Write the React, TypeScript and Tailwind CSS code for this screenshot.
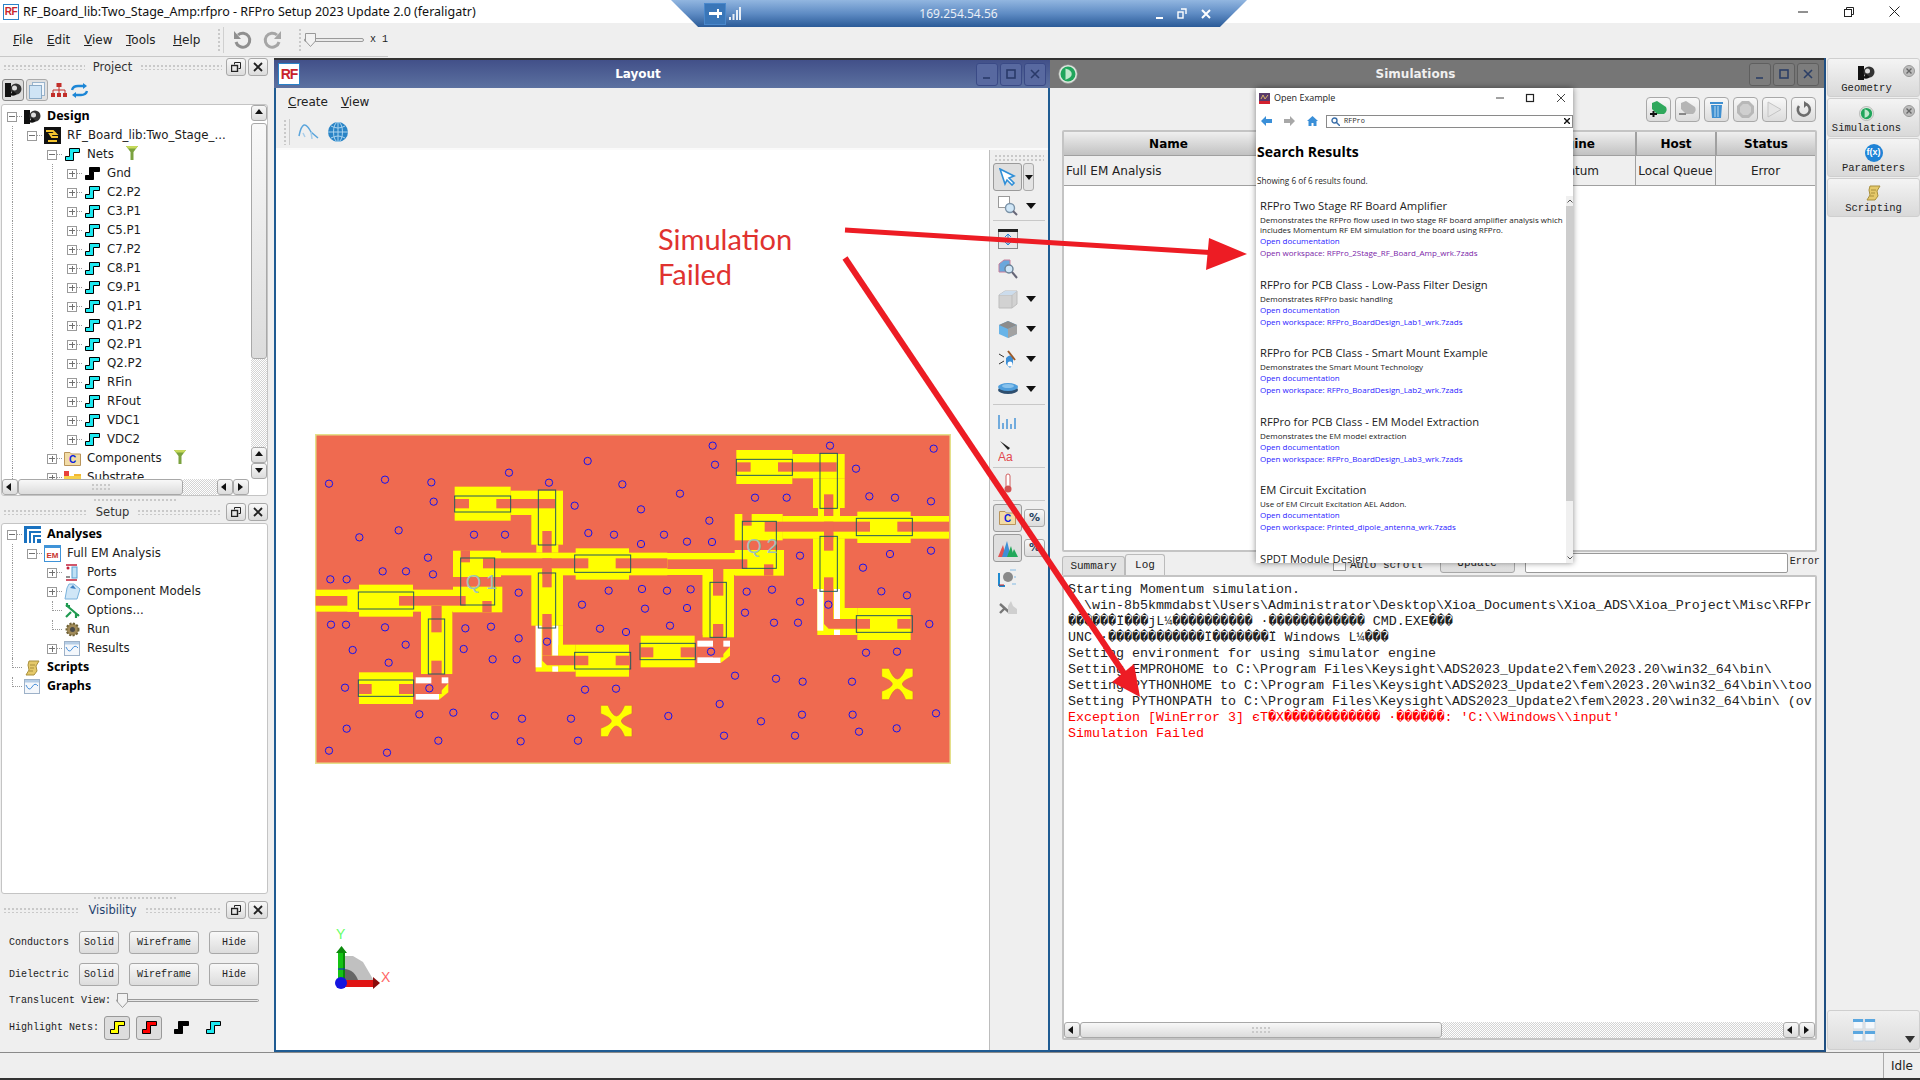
import React from 'react'

const uiFont = 'font-["DejaVu_Sans",sans-serif]'
const grip = 'bg-[radial-gradient(#c9c9c9_1px,transparent_1px)] bg-[length:4px_4px]'
const dither = 'bg-[repeating-conic-gradient(#d4d4d4_0_25%,#ffffff_0_50%)] bg-[length:2px_2px]'
const btnFace = 'bg-gradient-to-b from-[#f8f8f8] to-[#dcdcdc] border border-[#a8a8a8] rounded-[3px]'

const NetIcon = ({ color = '#1de9f0' }: { color?: string }) => (
  <svg width="15" height="13" viewBox="0 0 15 13">
    <path d="M.5 8.5H4.5V.5H14.5V4.5H8.5V12.5H.5Z" fill={color} stroke="#000" />
  </svg>
)

const DesignIcon = () => (
  <svg width="17" height="16" viewBox="0 0 17 16">
    <rect x="0" y="1" width="6" height="14" fill="#111" />
    <circle cx="11" cy="7" r="5.5" fill="#333" />
    <circle cx="9.5" cy="6" r="2.5" fill="#ddd" />
    <path d="M5 13 Q9 15 12 12 L8 9Z" fill="#111" />
  </svg>
)

const BoardIcon = () => (
  <svg width="17" height="17" viewBox="0 0 17 17">
    <rect width="17" height="17" fill="#111" />
    <path d="M2 4H9L12 7H6L8 10H14M4 14H13" stroke="#f4c430" strokeWidth="2" fill="none" />
  </svg>
)

const FilterIcon = () => (
  <svg width="12" height="14" viewBox="0 0 12 14">
    <path d="M0 0H12L7.5 6V14H4.5V6Z" fill="#7ba23f" />
    <path d="M0 0H12L10 2.5H2Z" fill="#c6d95a" />
  </svg>
)

const FolderC = () => (
  <svg width="17" height="14" viewBox="0 0 17 14">
    <path d="M.5 2V.5H6L7.5 2H16.5V13.5H.5Z" fill="#f2dca6" stroke="#b9945a" />
    <text x="8.5" y="11" textAnchor="middle" fontSize="10" fontWeight="700" fill="#0a1fe0" fontFamily="Liberation Sans">C</text>
  </svg>
)

const SubstrateIcon = () => (
  <svg width="17" height="14" viewBox="0 0 17 14">
    <rect x="0" y="0" width="5" height="5" fill="#e8413b" />
    <rect x="10" y="3" width="7" height="3" fill="#f2b632" />
    <rect x="0" y="5" width="17" height="4" fill="#f6d04a" />
    <rect x="0" y="9" width="17" height="5" fill="#a6c94a" />
  </svg>
)

const AnalysesIcon = () => (
  <svg width="17" height="17" viewBox="0 0 17 17">
    <path d="M0 0H17V3H3V17H0Z" fill="#1a72c0" />
    <path d="M5 5H17V7H7V17H5Z" fill="#1a72c0" />
    <path d="M9 9H17V11H11V17H9Z" fill="#1a72c0" />
    <path d="M13 13H17V17H13Z" fill="#1a72c0" />
  </svg>
)

const EmIcon = () => (
  <svg width="17" height="17" viewBox="0 0 17 17">
    <rect x=".5" y=".5" width="16" height="16" fill="#fff" stroke="#3f93d8" />
    <rect x="1" y="1" width="15" height="2" fill="#3f93d8" />
    <text x="8.5" y="13" textAnchor="middle" fontSize="8" fontWeight="700" fill="#c8342f" fontFamily="Liberation Sans">EM</text>
  </svg>
)

const PortsIcon = () => (
  <svg width="14" height="17" viewBox="0 0 14 17">
    <rect x="7" y="3" width="5" height="11" fill="#bfe1f5" stroke="#5a9fd0" />
    <path d="M1 1H12M1 16H12" stroke="#c2203a" strokeWidth="1.5" />
    <circle cx="3" cy="4" r="1.5" fill="#c2203a" />
    <path d="M1 13H5" stroke="#222" />
  </svg>
)

const ModelsIcon = () => (
  <svg width="17" height="17" viewBox="0 0 17 17">
    <path d="M3 5L1 16H13L16 6L10 1H5Z" fill="#cfe6f7" stroke="#7ab2dc" />
    <path d="M6 5L9 2L12 6Z" fill="#3d7fc4" />
  </svg>
)

const WrenchIcon = () => (
  <svg width="17" height="17" viewBox="0 0 17 17">
    <path d="M3 1V4H6M2 3L15 14M12 16V13H15" stroke="#1f9a50" strokeWidth="2.2" fill="none" />
    <path d="M2 15L7 10" stroke="#1f9a50" strokeWidth="2.2" />
  </svg>
)

const GearIcon = () => (
  <svg width="17" height="15" viewBox="0 0 17 15">
    <circle cx="8.5" cy="7.5" r="6" fill="#a08a58" stroke="#6f6238" strokeWidth="2" strokeDasharray="2 1.5" />
    <circle cx="8.5" cy="7.5" r="2.5" fill="#4a4a4a" />
  </svg>
)

const GraphIcon = () => (
  <svg width="16" height="15" viewBox="0 0 16 15">
    <rect x=".5" y=".5" width="15" height="14" fill="#f4f7fb" stroke="#9db1c8" />
    <rect x="1" y="1" width="14" height="2.5" fill="#b5cde6" />
    <path d="M2 6Q5 13 8 8T14 7" stroke="#4a90d9" fill="none" />
  </svg>
)

const ScrollIcon = () => (
  <svg width="15" height="16" viewBox="0 0 15 16">
    <path d="M4 1H14L11 6L12 11L9 15H1L4 10L3 5Z" fill="#e5c96a" stroke="#a88f3c" />
    <path d="M5 5H10M5 8H9M4 11H8" stroke="#a88f3c" />
  </svg>
)

const SimIcon = ({ size = 15 }: { size?: number }) => (
  <svg width={size} height={size} viewBox="0 0 16 16">
    <circle cx="8" cy="8" r="7.5" fill="#dfe7df" stroke="#8a8a8a" strokeWidth=".5" />
    <circle cx="8" cy="8" r="6" fill="#1fa55b" />
    <path d="M6 3.5Q11 5 11 8T6 12.5Z" fill="#bfe8cc" />
  </svg>
)

const Expander = ({ open }: { open: boolean }) => (
  <div className="relative w-5 h-full flex items-center justify-center shrink-0">
    <span className="absolute left-[14px] w-[6px] border-t border-dotted border-[#999]" />
    <span className="relative w-[10px] h-[10px] border border-[#9a9a9a] bg-white flex items-center justify-center">
      <span className="absolute w-[6px] h-px bg-[#707070]" />
      {!open && <span className="absolute w-px h-[6px] bg-[#707070]" />}
    </span>
  </div>
)

type Row = {
  guides: boolean[]
  exp?: 'open' | 'closed'
  icon: React.ReactNode
  label: string
  bold?: boolean
  after?: React.ReactNode
}

const TreeRow = ({ guides, exp, icon, label, bold, after }: Row) => (
  <div className="flex items-center h-[19px]">
    {guides.map((g, i) => (
      <div key={i} className="w-5 h-full shrink-0 flex justify-center">
        {g && <span className="h-full border-l border-dotted border-[#999]" />}
      </div>
    ))}
    {exp ? (
      <Expander open={exp === 'open'} />
    ) : (
      <div className="relative w-5 h-full shrink-0 flex items-center">
        <span className="absolute left-[10px] top-0 h-1/2 border-l border-dotted border-[#999]" />
        <span className="ml-[10px] w-[10px] border-t border-dotted border-[#999]" />
      </div>
    )}
    <div className="w-5 shrink-0 flex justify-center">{icon}</div>
    <span
      className={
        bold
          ? 'ml-[5px] font-["Noto_Sans",sans-serif] font-bold text-[12.5px] text-black whitespace-nowrap'
          : 'ml-[5px] font-["DejaVu_Sans",sans-serif] text-[11.8px] text-[#1c1c1c] whitespace-nowrap'
      }
    >
      {label}
    </span>
    {after}
  </div>
)

const nets = ['C2.P2', 'C3.P1', 'C5.P1', 'C7.P2', 'C8.P1', 'C9.P1', 'Q1.P1', 'Q1.P2', 'Q2.P1', 'Q2.P2', 'RFin', 'RFout', 'VDC1', 'VDC2']

const ScrollBtn = ({ dir }: { dir: 'up' | 'down' | 'left' | 'right' }) => {
  const d = { up: 'M1 6H9L5 1Z', down: 'M1 2H9L5 7Z', left: 'M6 1V9L1 5Z', right: 'M2 1V9L7 5Z' }[dir]
  return (
    <div className={`${btnFace} w-[16px] h-[16px] shrink-0 flex items-center justify-center`}>
      <svg width="10" height="10" viewBox="0 0 10 10">
        <path d={d} fill="#111" />
      </svg>
    </div>
  )
}

const DockTitle = ({ title, color = 'text-[#333]' }: { title: string; color?: string }) => (
  <div className="flex items-center h-[18px] pl-[3px] pr-[2px]">
    <div className={`flex-1 h-[6px] ${grip}`} />
    <span className={`px-2 pt-px text-[11.5px] ${uiFont} ${color}`}>{title}</span>
    <div className={`flex-1 h-[6px] ${grip}`} />
    <div className="flex gap-[2px] ml-1">
      <div className={`${btnFace} w-[20px] h-[18px] flex items-center justify-center`}>
        <svg width="10" height="10" viewBox="0 0 10 10" fill="none" stroke="#222">
          <path d="M3.5 2.5V.5H9.5V6.5H7.5" />
          <rect x=".5" y="3.5" width="6" height="6" strokeWidth="1.4" />
        </svg>
      </div>
      <div className={`${btnFace} w-[20px] h-[18px] flex items-center justify-center`}>
        <svg width="10" height="10" viewBox="0 0 10 10" stroke="#222" strokeWidth="1.8">
          <path d="M1 1L9 9M9 1L1 9" />
        </svg>
      </div>
    </div>
  </div>
)

const MonoBtn = ({ w, children }: { w: string; children: string }) => (
  <div className={`${btnFace} ${w} h-[23px] flex items-center justify-center`}>{children}</div>
)

const LeftColumn = () => (
  <div className="w-[270px] shrink-0 flex flex-col">
    <DockTitle title="Project" />
    <div className="h-[28px] flex items-center pl-[2px] gap-[2px]">
      <div className="w-[22px] h-[22px] border border-[#888] rounded-[3px] bg-[#dcdcdc] flex items-center justify-center">
        <DesignIcon />
      </div>
      <div className="w-[22px] h-[22px] border border-[#aaa] rounded-[3px] bg-[#e0e0e0] flex items-center justify-center">
        <svg width="16" height="17" viewBox="0 0 16 17">
          <rect x="3.5" y=".5" width="12" height="13" fill="#f2f6fa" stroke="#9ab4cc" />
          <rect x=".5" y="3.5" width="12" height="13" fill="#cfe4f5" stroke="#8aaac6" />
        </svg>
      </div>
      <div className="w-[18px] flex justify-center">
        <svg width="16" height="16" viewBox="0 0 16 16" fill="#c22f2a">
          <rect x="5.5" y="1" width="5" height="4" />
          <rect x="0" y="11" width="4" height="4" />
          <rect x="6" y="11" width="4" height="4" />
          <rect x="12" y="11" width="4" height="4" />
          <path d="M8 5V11M2 11V8H14V11" fill="none" stroke="#c22f2a" />
        </svg>
      </div>
      <div className="w-[18px] flex justify-center">
        <svg width="17" height="15" viewBox="0 0 17 15" fill="none" stroke="#1c86d6" strokeWidth="2.4">
          <path d="M1 7Q2 3 7 3H13M16 8Q15 12 10 12H4" />
          <path d="M12 0L16 3L12 6Z" fill="#1c86d6" stroke="none" />
          <path d="M5 9L1 12L5 15Z" fill="#1c86d6" stroke="none" />
        </svg>
      </div>
    </div>
    <div className="h-[392px] mr-[2px] ml-px border border-[#c4c4c4] rounded-[3px] bg-white flex flex-col overflow-hidden">
      <div className="flex h-[374px] overflow-hidden">
        <div className="flex-1 overflow-hidden pt-[2px]">
          <TreeRow guides={[]} exp="open" icon={<DesignIcon />} label="Design" bold />
          <TreeRow guides={[true]} exp="open" icon={<BoardIcon />} label="RF_Board_lib:Two_Stage_..." />
          <TreeRow guides={[true, false]} exp="open" icon={<NetIcon />} label="Nets" after={<span className="ml-3 -mt-1"><FilterIcon /></span>} />
          <TreeRow guides={[true, false, true]} exp="closed" icon={<NetIcon color="#000" />} label="Gnd" />
          {nets.map((n) => (
            <TreeRow key={n} guides={[true, false, true]} exp="closed" icon={<NetIcon />} label={n} />
          ))}
          <TreeRow guides={[true, false]} exp="closed" icon={<FolderC />} label="Components" after={<span className="ml-3 -mt-1"><FilterIcon /></span>} />
          <TreeRow guides={[true, false]} exp="closed" icon={<SubstrateIcon />} label="Substrate" />
        </div>
        <div className="w-[16px] flex flex-col shrink-0">
          <ScrollBtn dir="up" />
          <div className={`${btnFace} h-[236px] mt-[2px]`} />
          <div className={`flex-1 ${dither}`} />
          <ScrollBtn dir="up" />
          <ScrollBtn dir="down" />
        </div>
      </div>
      <div className="flex h-[16px] pr-[18px]">
        <ScrollBtn dir="left" />
        <div className={`${btnFace} w-[165px] flex items-center justify-center`}>
          <div className={`w-5 h-2 ${grip}`} />
        </div>
        <div className={`flex-1 ${dither}`} />
        <ScrollBtn dir="left" />
        <ScrollBtn dir="right" />
      </div>
    </div>
    <div className="h-[7px] flex items-center justify-center">
      <div className={`w-[84px] h-[3px] ${grip}`} />
    </div>
    <DockTitle title="Setup" />
    <div className="h-[371px] mt-[2px] mr-[2px] ml-px border border-[#c4c4c4] rounded-[3px] bg-white pt-px overflow-hidden">
      <TreeRow guides={[]} exp="open" icon={<AnalysesIcon />} label="Analyses" bold />
      <TreeRow guides={[true]} exp="open" icon={<EmIcon />} label="Full EM Analysis" />
      <TreeRow guides={[true, false]} exp="closed" icon={<PortsIcon />} label="Ports" />
      <TreeRow guides={[true, false]} exp="closed" icon={<ModelsIcon />} label="Component Models" />
      <TreeRow guides={[true, false]} icon={<WrenchIcon />} label="Options..." />
      <TreeRow guides={[true, false]} icon={<GearIcon />} label="Run" />
      <TreeRow guides={[true, false]} exp="closed" icon={<GraphIcon />} label="Results" />
      <TreeRow guides={[]} icon={<ScrollIcon />} label="Scripts" bold />
      <TreeRow guides={[]} icon={<GraphIcon />} label="Graphs" bold />
    </div>
    <div className="h-[7px] flex items-center justify-center">
      <div className={`w-[84px] h-[3px] ${grip}`} />
    </div>
    <DockTitle title="Visibility" color="text-[#1f3f6e]" />
    <div className='pl-[9px] pt-[12px] font-["Liberation_Mono","DejaVu_Sans_Mono",monospace] text-[10px] text-[#222]'>
      <div className="flex items-center gap-[10px]">
        <span className="w-[60px]">Conductors</span>
        <MonoBtn w="w-[40px]">Solid</MonoBtn>
        <MonoBtn w="w-[70px]">Wireframe</MonoBtn>
        <MonoBtn w="w-[50px]">Hide</MonoBtn>
      </div>
      <div className="flex items-center gap-[10px] mt-[9px]">
        <span className="w-[60px]">Dielectric</span>
        <MonoBtn w="w-[40px]">Solid</MonoBtn>
        <MonoBtn w="w-[70px]">Wireframe</MonoBtn>
        <MonoBtn w="w-[50px]">Hide</MonoBtn>
      </div>
      <div className="flex items-center mt-[4px] h-[20px]">
        <span className="w-[107px]">Translucent View:</span>
        <div className="relative w-[143px] h-[3px] border border-[#9a9a9a] rounded-full bg-[#e8e8e8] flex items-center">
          <svg width="11" height="15" viewBox="0 0 11 15" className="absolute left-0">
            <path d="M.5 .5H10.5V9L5.5 14.5L.5 9Z" fill="#f2f2f2" stroke="#999" />
          </svg>
        </div>
      </div>
      <div className="flex items-center mt-[6px] h-[23px]">
        <span className="w-[95px]">Highlight Nets:</span>
        <div className="w-[26px] h-[24px] rounded-[3px] border border-[#999] bg-[#dddddd] flex items-center justify-center">
          <NetIcon color="#ffff00" />
        </div>
        <div className="w-[26px] h-[24px] ml-[6px] rounded-[3px] border border-[#999] bg-[#dddddd] flex items-center justify-center">
          <NetIcon color="#ff0000" />
        </div>
        <div className="ml-[6px] w-[26px] flex justify-center"><NetIcon color="#000" /></div>
        <div className="ml-[6px] w-[26px] flex justify-center"><NetIcon /></div>
      </div>
    </div>
  </div>
)

const yellow = '#ffff00'
const etch = '#ef6a50'

const Box = ({ x, y, w, h, c }: { x: number; y: number; w: number; h: number; c: string }) => (
  <rect x={x} y={y} width={w} height={h} fill={c} />
)

// all pcb numbers are in 3x pixels of the picture
const Stage = ({ dx, dy, inputX }: { dx: number; dy: number; inputX: number }) => (
  <g transform={`translate(${dx} ${dy})`}>
    {/* input line and bias stub */}
    <Box x={115} y={492} w={320} h={66} c={yellow} />
    <Box x={336} y={540} w={94} h={205} c={yellow} />
    <Box x={336} y={558} w={30} h={180} c={yellow} />
    {/* lower left pad */}
    <Box x={150} y={740} w={162} h={95} c={yellow} />
    <Box x={320} y={755} w={98} h={18} c="#fff" />
    <Box x={320} y={803} w={70} h={19} c="#fff" />
    <path d="M418 773V800L390 822V803Z" fill={yellow} />
    <Box x={150} y={775} w={38} h={30} c={etch} />
    <Box x={270} y={775} w={120} h={30} c={etch} />
    <Box x={367} y={705} w={31} h={100} c={etch} />
    <Box x={367} y={540} w={31} h={80} c={etch} />
    {/* transistor */}
    <Box x={432} y={375} w={144} h={79} c={yellow} />
    <Box x={432} y={483} w={148} h={77} c={yellow} />
    <Box x={455} y={374} w={28} h={36} c={etch} />
    <Box x={520} y={526} w={28} h={34} c={etch} />
    <Box x={inputX} y={511} w={470 - inputX} h={29} c={etch} />
    {/* top stub */}
    <Box x={437} y={183} w={168} h={102} c={yellow} />
    <Box x={605} y={195} w={157} h={73} c={yellow} />
    <Box x={667} y={268} w={95} h={89} c={yellow} />
    <Box x={682} y={357} w={66} h={24} c={yellow} />
    <Box x={437} y={220} w={43} h={28} c={etch} />
    <Box x={562} y={220} w={176} h={28} c={etch} />
    <Box x={700} y={316} w={28} h={170} c={etch} />
    {/* output line */}
    <Box x={575} y={381} w={500} h={68} c={yellow} />
    <Box x={800} y={368} w={160} h={94} c={yellow} />
    <Box x={522} y={398} w={316} h={30} c={etch} />
    <Box x={920} y={398} w={155} h={30} c={etch} />
    <Box x={700} y={398} w={28} h={88} c={etch} />
    {/* lower stub */}
    <Box x={667} y={448} w={95} h={152} c={yellow} />
    <Box x={748} y={600} w={14} h={60} c={yellow} />
    <Box x={680} y={600} w={68} h={138} c={yellow} />
    <Box x={680} y={600} w={18} h={125} c="#fff" />
    <Box x={730} y={600} w={18} h={90} c="#fff" />
    <Box x={730} y={722} w={18} h={16} c="#fff" />
    <Box x={748} y={657} w={52} h={81} c={yellow} />
    <Box x={800} y={657} w={160} h={96} c={yellow} />
    <Box x={700} y={565} w={28} h={125} c={etch} />
    <path d="M700 690V705L714 719H838V690Z" fill={etch} />
    <Box x={920} y={690} w={40} h={29} c={etch} />
    <Box x={700} y={430} w={28} h={55} c={etch} />
    <g fill="none" stroke="#245a5e" strokeWidth="3">
      <rect x="148" y="763" width="166" height="49" />
      <rect x="358" y="580" width="49" height="165" />
      <rect x="455" y="397" width="102" height="141" />
      <rect x="437" y="211" width="168" height="48" />
      <rect x="688" y="193" width="52" height="165" />
      <rect x="688" y="442" width="52" height="165" />
      <rect x="797" y="388" width="168" height="52" />
      <rect x="797" y="680" width="168" height="50" />
    </g>
  </g>
)

const vias: [number, number][] = [
  [60, 174], [228, 162], [367, 170], [374, 228], [600, 141], [836, 106], [720, 171], [940, 176], [797, 240], [151, 335], [269, 314], [495, 327], [588, 327], [838, 322], [915, 327], [357, 396], [221, 437], [291, 437], [372, 446], [64, 461], [113, 461], [629, 501], [899, 495], [819, 537], [66, 597], [111, 597], [228, 605], [469, 608], [546, 603], [873, 609], [951, 619], [629, 638], [714, 648], [131, 673], [290, 657], [464, 670], [239, 711], [551, 701], [623, 701], [108, 786], [361, 788], [828, 792], [921, 789], [331, 866], [433, 861], [557, 870], [639, 879], [786, 879], [113, 909], [388, 945], [635, 947], [807, 945], [60, 975], [234, 981],
  [1211, 60], [1563, 60], [1874, 69], [1218, 117], [1641, 129], [1113, 204], [996, 251], [1338, 216], [1433, 216], [1681, 212], [1758, 216], [1866, 227], [1201, 285], [1065, 327], [996, 355], [1134, 348], [1209, 349], [1473, 390], [1866, 375], [1743, 385], [1662, 426], [999, 490], [1074, 495], [1145, 491], [1313, 498], [1389, 492], [1473, 528], [1717, 497], [1794, 509], [1008, 549], [1134, 547], [1558, 537], [1308, 561], [1083, 600], [1395, 591], [1467, 591], [1861, 595], [1206, 678], [1671, 681], [1764, 678], [1278, 750], [1401, 759], [1481, 768], [1629, 768], [1232, 835], [1078, 871], [1356, 887], [1479, 867], [1631, 867], [1881, 863], [1650, 918], [1763, 908], [1245, 930], [1458, 930],
]

const Cross = ({ x, y }: { x: number; y: number }) => (
  <path
    transform={`translate(${x} ${y})`}
    d="M-47-47L-25-47Q-12-15 0-15Q12-15 25-47L47-47L47-22Q15-10 15 0Q15 10 47 22L47 47L25 47Q12 15 0 15Q-12 15-25 47L-47 47L-47 22Q-15 10-15 0Q-15-10-47-22Z"
    fill={yellow}
    stroke="#dd6045"
    strokeWidth="2"
  />
)

const Pcb = () => (
  <svg width="636" height="330" viewBox="18 25 1908 990" className="shrink-0">
    <rect x="20" y="27" width="1904" height="986" fill={etch} stroke="#e4e08a" strokeWidth="5" />
    <Stage dx={845} dy={-110} inputX={115} />
    <Box x={20} y={492} w={130} h={66} c={yellow} />
    <Box x={150} y={477} w={162} h={96} c={yellow} />
    <Box x={20} y={511} w={168} h={29} c={etch} />
    <Stage dx={0} dy={0} inputX={270} />
    <rect x="148" y="499" width="166" height="51" fill="none" stroke="#245a5e" strokeWidth="3" />
    <text x="470" y="490" fontSize="60" fill="#9cc3b8" fontFamily="Liberation Sans" letterSpacing="14">Q1</text>
    <text x="1312" y="381" fontSize="60" fill="#9cc3b8" fontFamily="Liberation Sans" letterSpacing="14">Q2</text>
    <Cross x={922} y={886} />
    <Cross x={1765} y={775} />
    {vias.map(([x, y], i) => (
      <circle key={i} cx={x} cy={y} r="11" fill="none" stroke="#1414f0" strokeWidth="3" />
    ))}
  </svg>
)

const Axis = () => (
  <svg width="70" height="72" viewBox="0 0 70 72" className="absolute left-[53px] bottom-[56px]">
    <path d="M15 61V34H24L34 40L41 52L46 61Z" fill="#c0c0c0" />
    <path d="M15 61V47Q26 47 30 61Z" fill="#666" />
    <rect x="9" y="31" width="7" height="28" fill="#14c314" />
    <rect x="14" y="31" width="2" height="28" fill="#0a8a0a" />
    <path d="M7 31L12.5 24L18 31Z" fill="#0c8a0c" />
    <rect x="16" y="58" width="28" height="7" fill="#e01414" />
    <path d="M44 55L51 61L44 67Z" fill="#8a0c0c" />
    <circle cx="12" cy="61" r="6" fill="#1414e0" />
    <path d="M9 47H16" stroke="#1414e0" />
    <text x="7" y="17" fontSize="14" fill="#66ff66" fontFamily="Liberation Sans">Y</text>
    <text x="52" y="60" fontSize="14" fill="#ff6666" fontFamily="Liberation Sans">X</text>
  </svg>
)

const Caret = () => (
  <svg width="10" height="6" viewBox="0 0 10 6">
    <path d="M0 0H10L5 6Z" fill="#111" />
  </svg>
)

const ToolRow = ({ children, caret }: { children: React.ReactNode; caret?: boolean }) => (
  <div className="h-[30px] flex items-center pl-[3px]">
    <div className="w-[30px] flex justify-center">{children}</div>
    {caret && <span className="ml-[3px] flex"><Caret /></span>}
  </div>
)

const Sep = () => <div className="h-px bg-[#c8c8c8] mx-[3px]" />

const LayoutTools = () => (
  <div className="w-[59px] shrink-0 border-l border-[#bdbdbd] bg-[#efefef] flex flex-col">
    <div className={`h-[7px] mt-[4px] mx-[4px] ${grip}`} />
    <div className="h-[30px] flex items-center pl-[3px] mt-px">
      <div className="w-[29px] h-[28px] rounded-[3px] border border-[#9a9a9a] bg-[#dfdfdf] flex items-center justify-center">
        <svg width="17" height="18" viewBox="0 0 17 18">
          <path d="M1 1L15 8L10 10L15 15L13 17L8 12L6 16Z" fill="#fff" stroke="#2f8fd8" strokeWidth="1.6" />
        </svg>
      </div>
      <div className="ml-px w-[11px] h-[28px] rounded-[3px] border border-[#aaa] bg-[#e4e4e4] flex items-center justify-center">
        <svg width="8" height="5" viewBox="0 0 8 5"><path d="M0 0H8L4 5Z" fill="#111" /></svg>
      </div>
    </div>
    <div className="h-[28px] flex items-center pl-[3px]">
      <div className="w-[30px] flex justify-center">
        <svg width="20" height="20" viewBox="0 0 20 20">
          <rect x=".5" y=".5" width="11" height="11" fill="#fff" stroke="#999" />
          <circle cx="12" cy="12" r="4.5" fill="#cfe6f7" stroke="#7b93a8" strokeWidth="1.4" />
          <path d="M15 15L19 19" stroke="#667" strokeWidth="2" />
        </svg>
      </div>
      <span className="ml-[3px] flex"><Caret /></span>
    </div>
    <Sep />
    <div className="mt-[3px]" />
    <ToolRow>
      <svg width="20" height="20" viewBox="0 0 20 20">
        <rect x=".5" y=".5" width="19" height="19" fill="#e9e9e9" stroke="#888" />
        <rect y="0" width="20" height="3" fill="#222" />
        <path d="M10 6V15M7 8L10 5L13 8M7 13L10 16L13 13" stroke="#2b86d0" fill="none" />
      </svg>
    </ToolRow>
    <ToolRow>
      <svg width="20" height="20" viewBox="0 0 20 20">
        <path d="M1 5L6 1H12V9L8 13H1Z" fill="#6aa7dc" stroke="#c77f9a" />
        <circle cx="11" cy="10" r="4" fill="#cfe6f7" stroke="#6a8296" strokeWidth="1.4" />
        <path d="M14 13L19 19" stroke="#667" strokeWidth="2" />
      </svg>
    </ToolRow>
    <ToolRow caret>
      <svg width="20" height="19" viewBox="0 0 20 19">
        <path d="M1 5L7 1H19V14L14 18H1Z" fill="#d2d2d2" stroke="#bdbdbd" />
        <path d="M1 5H14V18M14 5L19 1" fill="none" stroke="#bdbdbd" />
        <path d="M7 1H19L14 5H1Z" fill="#ccdcec" />
      </svg>
    </ToolRow>
    <ToolRow caret>
      <svg width="20" height="19" viewBox="0 0 20 19">
        <path d="M1 5L10 1L19 5V14L10 18L1 14Z" fill="#68b4e8" />
        <path d="M1 5L10 1L19 5L10 9Z" fill="#8c8c8c" />
        <path d="M10 9L19 5V14L10 18Z" fill="#a2a2a2" />
      </svg>
    </ToolRow>
    <ToolRow caret>
      <svg width="20" height="19" viewBox="0 0 20 19">
        <path d="M1 4L6 7M1 14L6 11" stroke="#333" fill="none" />
        <path d="M8 8Q12 3 15 8V14L12 18L8 14Z" fill="#3c8fd6" />
        <path d="M10 1L17 10" stroke="#9a5a2a" strokeWidth="2" />
        <circle cx="12" cy="14" r="2.5" fill="#fff" />
      </svg>
    </ToolRow>
    <ToolRow caret>
      <svg width="20" height="14" viewBox="0 0 20 14">
        <ellipse cx="10" cy="8" rx="10" ry="4" fill="#2f4f6f" />
        <ellipse cx="10" cy="5" rx="10" ry="4" fill="#4f9edc" />
        <ellipse cx="10" cy="4" rx="6" ry="2" fill="#88c2ec" />
      </svg>
    </ToolRow>
    <Sep />
    <div className="h-[2px]" />
    <ToolRow>
      <svg width="20" height="14" viewBox="0 0 20 14" stroke="#3d8fd6" strokeWidth="1.4">
        <path d="M1 0V14M5 8V14M9 4V14M13 9V14M17 3V14" />
      </svg>
    </ToolRow>
    <ToolRow>
      <svg width="20" height="25" viewBox="0 0 20 25">
        <path d="M2 1L12 8L10 10Z" fill="#222" />
        <text x="0" y="21" fontSize="12" fill="#e2484d" fontFamily="Liberation Sans">Aa</text>
      </svg>
    </ToolRow>
    <Sep />
    <ToolRow>
      <svg width="12" height="21" viewBox="0 0 12 21">
        <rect x="4" y="1" width="4" height="14" rx="2" fill="#fff" stroke="#d06060" />
        <circle cx="6" cy="16" r="3.5" fill="#d25252" />
      </svg>
    </ToolRow>
    <div className="h-[2px]" />
    <Sep />
    <div className="h-[2px]" />
    <div className="h-[30px] flex items-center pl-[3px] gap-[2px]">
      <div className="w-[29px] h-[28px] rounded-[3px] border border-[#9a9a9a] bg-[#dfdfdf] flex items-center justify-center">
        <FolderC />
      </div>
      <div className={`${btnFace} w-[21px] h-[18px] text-[11px] font-bold text-[#24405e] flex items-center justify-center ${uiFont}`}>%</div>
    </div>
    <div className="h-[30px] flex items-center pl-[3px] gap-[2px]">
      <div className="w-[29px] h-[28px] rounded-[3px] border border-[#9a9a9a] bg-[#dfdfdf] flex items-center justify-center">
        <svg width="20" height="17" viewBox="0 0 20 17">
          <path d="M0 17L5 5L8 17Z" fill="#e05454" />
          <path d="M4 17L9 1L13 17Z" fill="#3d8fd6" />
          <path d="M9 17L13 6L16 17Z" fill="#22a85a" />
          <path d="M13 17L16 9L20 17Z" fill="#22a85a" />
        </svg>
      </div>
      <div className={`${btnFace} w-[21px] h-[18px] text-[11px] font-bold text-[#24405e] flex items-center justify-center ${uiFont}`}>%</div>
    </div>
    <ToolRow>
      <svg width="20" height="18" viewBox="0 0 20 18">
        <path d="M1 4V17M1 17H7" stroke="#1f8ad0" strokeWidth="2" />
        <circle cx="10" cy="8" r="5" fill="#8a8a8a" />
        <path d="M12 1H18M18 8H16M14 15H18" stroke="#b9d5ea" strokeWidth="2" />
        <path d="M1 16H6" stroke="#c22" />
      </svg>
    </ToolRow>
    <ToolRow>
      <svg width="20" height="18" viewBox="0 0 20 18">
        <path d="M2 5L12 14M2 14L6 10" stroke="#777" strokeWidth="2.4" />
        <path d="M10 15V7L13 2L15 7L19 10V15Z" fill="#cfcfcf" />
      </svg>
    </ToolRow>
  </div>
)

const WinBtn = ({ kind, tint }: { kind: 'min' | 'max' | 'close'; tint: string }) => (
  <div className={`w-[22px] h-[23px] rounded-[3px] border ${tint} flex items-center justify-center`}>
    <svg width="10" height="10" viewBox="0 0 10 10" fill="none" stroke="currentColor" strokeWidth="1.6">
      {kind === 'min' && <path d="M1 9H8" />}
      {kind === 'max' && <rect x="1" y="1" width="8" height="8" />}
      {kind === 'close' && <path d="M1 1L9 9M9 1L1 9" />}
    </svg>
  </div>
)

const LayoutWindow = () => (
  <div className="w-[776px] shrink-0 flex flex-col border-x-2 border-b-2 border-[#1f5b92]">
    <div className="h-[30px] shrink-0 border-t-2 border-t-[#333] -mx-[2px] bg-gradient-to-b from-[#425089] to-[#5c71a0] flex items-center pl-[4px] pr-[4px]">
      <div className="w-[22px] h-[22px] bg-white border border-[#2a82c8] flex items-center justify-center">
        <span className='font-["Liberation_Sans",sans-serif] font-bold text-[14px] tracking-[-1px] text-[#c8242c]'>RF</span>
      </div>
      <div className='flex-1 text-center font-["DejaVu_Sans",sans-serif] font-bold text-[12px] text-white'>Layout</div>
      <div className="flex gap-[2px] text-[#2a3a6a]">
        <WinBtn kind="min" tint="border-[#3a4a86] bg-[#5869a0]" />
        <WinBtn kind="max" tint="border-[#3a4a86] bg-[#5869a0]" />
        <WinBtn kind="close" tint="border-[#3a4a86] bg-[#5869a0]" />
      </div>
    </div>
    <div className={`h-[27px] shrink-0 bg-[#efefef] flex items-center pl-[12px] gap-[13px] text-[12px] text-[#222] ${uiFont}`}>
      <span><u>C</u>reate</span>
      <span><u>V</u>iew</span>
    </div>
    <div className="h-[35px] shrink-0 bg-[#efefef] border-b-2 border-[#fafafa] flex items-center pl-[7px]">
      <div className={`w-[5px] h-[26px] ${grip}`} />
      <div className="ml-[1px] w-px h-[26px] bg-[#ccc]" />
      <div className="ml-[6px] w-[24px] flex justify-center">
        <svg width="21" height="16" viewBox="0 0 21 16" fill="none" stroke="#5ba5dc" strokeWidth="1.5">
          <path d="M1 12Q3 2 6 1T13 8L20 14" />
          <path d="M5 9L7 13M13 8L14 15" stroke="#a8cdea" />
        </svg>
      </div>
      <div className="ml-[7px] w-[22px] flex justify-center">
        <svg width="20" height="20" viewBox="0 0 20 20">
          <circle cx="10" cy="10" r="10" fill="#2a84c6" />
          <path d="M0 10H20M10 0V20M3 4Q10 8 17 4M3 16Q10 12 17 16" stroke="#a9d3ef" fill="none" />
          <ellipse cx="10" cy="10" rx="4.5" ry="10" stroke="#a9d3ef" fill="none" />
        </svg>
      </div>
    </div>
    <div className="flex-1 min-h-0 flex">
      <div className="relative flex-1 bg-white flex items-center justify-center pb-[3px]">
        <Pcb />
        <Axis />
      </div>
      <LayoutTools />
    </div>
  </div>
)

const SimToolBtn = ({ children }: { children: React.ReactNode }) => (
  <div className={`${btnFace} w-[25px] h-[25px] rounded-[4px] flex items-center justify-center`}>{children}</div>
)

const logLines = [
  'Starting Momentum simulation.',
  ' \\\\win-8b5kmmdabst\\Users\\Administrator\\Desktop\\Xioa_Documents\\Xioa_ADS\\Xioa_Project\\Misc\\RFPr',
  '������Ï���jL¼���������� ·������������ CMD.EXE���',
  'UNC ·������������Ï�������Ï Windows L¼���',
  'Setting environment for using simulator engine',
  'Setting EMPROHOME to C:\\Program Files\\Keysight\\ADS2023_Update2\\fem\\2023.20\\win32_64\\bin\\',
  'Setting PYTHONHOME to C:\\Program Files\\Keysight\\ADS2023_Update2\\fem\\2023.20\\win32_64\\bin\\\\too',
  'Setting PYTHONPATH to C:\\Program Files\\Keysight\\ADS2023_Update2\\fem\\2023.20\\win32_64\\bin\\ (ov',
]

const SimulationsWindow = () => (
  <div className="w-[776px] shrink-0 flex flex-col border-r-2 border-b-2 border-[#1f4f82] bg-[#efefef]">
    <div className="h-[30px] shrink-0 border-t-2 border-t-[#333] bg-[#767676] flex items-center pl-[8px] pr-[5px]">
      <SimIcon size={20} />
      <div className='flex-1 text-center pl-[4px] font-["DejaVu_Sans",sans-serif] font-bold text-[12px] text-[#f0f0f0]'>Simulations</div>
      <div className="flex gap-[2px] text-[#2c3f66]">
        <WinBtn kind="min" tint="border-[#5f5f5f] bg-[#7d7d7d]" />
        <WinBtn kind="max" tint="border-[#5f5f5f] bg-[#7d7d7d]" />
        <WinBtn kind="close" tint="border-[#5f5f5f] bg-[#7d7d7d]" />
      </div>
    </div>
    <div className="h-[42px] shrink-0 flex items-center justify-end gap-[4px] pr-[8px]">
      <SimToolBtn>
        <svg width="19" height="18" viewBox="0 0 19 18">
          <path d="M3 3L8 1L17 7Q19 11 15 14L8 14L3 9Z" fill="#2fa85c" />
          <path d="M1 14H8M4.5 11V17" stroke="#111" strokeWidth="2" />
        </svg>
      </SimToolBtn>
      <SimToolBtn>
        <svg width="19" height="18" viewBox="0 0 19 18">
          <path d="M3 3L8 1L17 7Q19 11 15 14L8 14L3 9Z" fill="#b5b5b5" />
          <path d="M1 14H8" stroke="#888" strokeWidth="2" />
        </svg>
      </SimToolBtn>
      <SimToolBtn>
        <svg width="13" height="17" viewBox="0 0 13 17">
          <path d="M0 1H13V3H0ZM1 4H12L11 17H2Z" fill="#3f8fd0" />
          <path d="M5 5V16M8 5V16" stroke="#bcdcf2" />
        </svg>
      </SimToolBtn>
      <SimToolBtn>
        <svg width="17" height="17" viewBox="0 0 17 17">
          <path d="M5 0H12L17 5V12L12 17H5L0 12V5Z" fill="#b8b8b8" />
          <path d="M6 3H11L14 6V11L11 14H6L3 11V6Z" fill="#cfcfcf" />
        </svg>
      </SimToolBtn>
      <SimToolBtn>
        <svg width="15" height="17" viewBox="0 0 15 17">
          <path d="M1 1L14 8.5L1 16Z" fill="#e6e6e6" stroke="#c4c4c4" />
        </svg>
      </SimToolBtn>
      <SimToolBtn>
        <svg width="17" height="17" viewBox="0 0 17 17" fill="none" stroke="#6c6c6c" strokeWidth="2.6">
          <path d="M11 3A6 6 0 1 1 4 5" />
          <path d="M9 0V7L13 3Z" fill="#6c6c6c" stroke="none" />
        </svg>
      </SimToolBtn>
    </div>
    <div className={`ml-[12px] mr-[7px] h-[422px] shrink-0 border-2 border-[#c4c4c4] rounded-[2px] bg-white flex flex-col ${uiFont} text-[12px] text-[#222]`}>
      <div className="h-[24px] flex bg-gradient-to-b from-[#efefef] to-[#c2c2c2] font-bold text-black border-b border-[#a0a0a0]">
        <div className="w-[209px] flex items-center justify-center">Name</div>
        <div className="flex-1 border-l border-[#a0a0a0] flex items-center justify-end pr-[40px]">Engine</div>
        <div className="w-[80px] border-l-2 border-[#a0a0a0] flex items-center justify-center">Host</div>
        <div className="w-[100px] border-l-2 border-[#a0a0a0] flex items-center justify-center">Status</div>
      </div>
      <div className="h-[30px] flex bg-[#efefef] border-b border-[#a0a0a0]">
        <div className="w-[209px] flex items-center pl-[2px]">Full EM Analysis</div>
        <div className="flex-1 border-l border-[#a0a0a0] flex items-center justify-end pr-[36px]">Momentum</div>
        <div className="w-[80px] border-l border-[#a0a0a0] flex items-center justify-center">Local Queue</div>
        <div className="w-[100px] border-l border-[#a0a0a0] flex items-center justify-center">Error</div>
      </div>
    </div>
    <div className='h-[21px] mt-[2px] shrink-0 flex items-end pl-[12px] font-["Liberation_Mono","DejaVu_Sans_Mono",monospace] text-[11px] text-[#222]'>
      <div className="w-[63px] h-[19px] border border-[#bbb] border-b-0 rounded-t-[3px] bg-[#e2e2e2] flex items-center justify-center">Summary</div>
      <div className="w-[40px] h-[21px] border border-[#bbb] border-b-0 rounded-t-[3px] bg-[#efefef] flex items-center justify-center">Log</div>
      <div className="ml-[168px] mb-[2px] flex items-center gap-[4px]">
        <div className="w-[13px] h-[13px] border border-[#999] bg-white" />
        <span>Auto scroll</span>
      </div>
      <div className={`${btnFace} ml-[17px] mb-[2px] w-[75px] h-[20px] flex items-center justify-center`}>Update</div>
      <div className="ml-[10px] mb-[2px] w-[263px] h-[20px] border border-[#999] rounded-[2px] bg-white" />
      <span className="ml-[2px] mb-[6px] text-[10px]">Error</span>
    </div>
    <div className="ml-[12px] mr-[7px] flex-1 min-h-0 mb-[10px] border-2 border-[#c4c4c4] rounded-[2px] bg-white flex flex-col overflow-hidden">
      <div className='flex-1 min-h-0 overflow-hidden pl-[4px] pt-[5px] font-["Liberation_Mono","DejaVu_Sans_Mono",monospace] text-[13.33px] leading-[16px] text-[#222] whitespace-pre'>
        {logLines.map((l, i) => (
          <div key={i} className="h-[16px]">{l}</div>
        ))}
        <div className="h-[16px] text-[#ff0000]">{"Exception [WinError 3] єT�Χ������������ ·������: 'C:\\\\Windows\\\\input'"}</div>
        <div className="h-[16px] text-[#ff0000]">Simulation Failed</div>
      </div>
      <div className="h-[16px] shrink-0 flex">
        <ScrollBtn dir="left" />
        <div className={`${btnFace} w-[362px] flex items-center justify-center`}>
          <div className={`w-5 h-2 ${grip}`} />
        </div>
        <div className={`flex-1 ${dither}`} />
        <ScrollBtn dir="left" />
        <ScrollBtn dir="right" />
      </div>
    </div>
  </div>
)

const SideBtn = ({ icon, label, close }: { icon: React.ReactNode; label: string; close?: boolean }) => (
  <div
    className={
      close
        ? 'relative h-[39px] rounded-[3px] border border-[#cfcfcf] bg-gradient-to-b from-[#f4f4f4] to-[#d9d9d9] flex flex-col items-center pt-[5px] pr-[14px] font-["Liberation_Mono","DejaVu_Sans_Mono",monospace] text-[10.5px] text-[#222]'
        : 'relative h-[39px] rounded-[3px] border border-[#cfcfcf] bg-gradient-to-b from-[#f4f4f4] to-[#d9d9d9] flex flex-col items-center pt-[5px] font-["Liberation_Mono","DejaVu_Sans_Mono",monospace] text-[10.5px] text-[#222]'
    }
  >
    <div className="h-[18px] flex items-center">{icon}</div>
    <span className="leading-[12px]">{label}</span>
    {close && (
      <svg width="12" height="12" viewBox="0 0 12 12" className="absolute right-[4px] top-[6px]">
        <circle cx="6" cy="6" r="5.5" fill="#bdbdbd" stroke="#999" />
        <path d="M3.5 3.5L8.5 8.5M8.5 3.5L3.5 8.5" stroke="#666" strokeWidth="1.4" />
      </svg>
    )}
  </div>
)

const SideStrip = () => (
  <div className="w-[94px] shrink-0 flex flex-col pl-[1px] gap-px">
    <SideBtn icon={<DesignIcon />} label="Geometry" close />
    <SideBtn icon={<SimIcon />} label="Simulations" close />
    <SideBtn
      icon={
        <div className='w-[18px] h-[18px] rounded-full bg-[#1f83d6] text-white text-[9px] font-bold flex items-center justify-center font-["Liberation_Sans",sans-serif]'>
          f(x)
        </div>
      }
      label="Parameters"
    />
    <SideBtn icon={<ScrollIcon />} label="Scripting" />
    <div className="flex-1" />
    <div className="relative h-[40px] mb-[2px] rounded-[3px] border border-[#cfcfcf] bg-gradient-to-b from-[#f0f0f0] to-[#dcdcdc] flex items-center justify-center pr-[18px]">
      <svg width="23" height="23" viewBox="0 0 23 23">
        <rect x="0" y="0" width="10" height="10" fill="#f4f8fc" stroke="#cdd8e2" />
        <rect x="12" y="0" width="10" height="10" fill="#f4f8fc" stroke="#cdd8e2" />
        <rect x="0" y="12" width="10" height="10" fill="#f4f8fc" stroke="#cdd8e2" />
        <rect x="12" y="12" width="10" height="10" fill="#f4f8fc" stroke="#cdd8e2" />
        <path d="M0 0H10V3H0ZM12 0H22V3H12ZM0 12H10V15H0ZM12 12H22V15H12Z" fill="#5aa7e0" />
      </svg>
      <svg width="10" height="7" viewBox="0 0 10 7" className="absolute right-[4px] bottom-[6px]">
        <path d="M0 0H10L5 7Z" fill="#333" />
      </svg>
    </div>
  </div>
)

const RemoteBar = () => (
  <div className='absolute left-[671px] top-0 w-[576px] h-[27px] [clip-path:polygon(0_0,100%_0,95.3%_100%,4.7%_100%)] bg-gradient-to-b from-[#92b6e0] via-[#5f8cc4] to-[#2a5b98] flex items-center pl-[33px] pr-[36px] font-["Noto_Sans",sans-serif] text-[12px] text-[#e8eef6]'>
    <div className="w-[22px] h-[22px] bg-[#3a76b8] border border-[#4a88cc] flex items-center justify-center">
      <svg width="13" height="11" viewBox="0 0 13 11" fill="#fff">
        <path d="M0 4H8V1H10V10H8V7H0ZM10 4H13V7H10Z" />
      </svg>
    </div>
    <svg width="12" height="13" viewBox="0 0 12 13" fill="#e8eef6" className="ml-[3px]">
      <rect x="0" y="10" width="2" height="3" />
      <rect x="3.5" y="7" width="2" height="6" />
      <rect x="7" y="3" width="2" height="10" />
      <rect x="10" y="0" width="2" height="13" />
    </svg>
    <div className="flex-1 text-center pl-[20px]">169.254.54.56</div>
    <div className="flex items-center gap-[14px]">
      <svg width="7" height="10" viewBox="0 0 7 10"><path d="M0 8H7V10H0Z" fill="#fff" /></svg>
      <svg width="10" height="11" viewBox="0 0 10 11" fill="none" stroke="#fff" strokeWidth="1.4">
        <rect x="1" y="4" width="5" height="6" />
        <path d="M4 1H9V6" />
      </svg>
      <svg width="10" height="10" viewBox="0 0 10 10" stroke="#fff" strokeWidth="2"><path d="M1 1L9 9M9 1L1 9" /></svg>
    </div>
  </div>
)

const ExampleItem = ({ title, desc, ws, visited }: { title: string; desc: string[]; ws: string; visited?: boolean }) => (
  <div className="pb-[18.5px] pl-[4px]">
    <div className="leading-[14px] text-[11.2px] text-[#222]">{title}</div>
    <div className="mt-[2px] text-[8px] leading-[10px] text-[#222]">
      {desc.map((d) => (
        <div key={d} className="whitespace-nowrap">{d}</div>
      ))}
    </div>
    <div className="text-[8px] leading-[12px] text-[#2a1aff]">Open documentation</div>
    <div className={visited ? 'text-[8px] leading-[12px] text-[#7a24a8]' : 'text-[8px] leading-[12px] text-[#2a1aff]'}>
      Open workspace: {ws}
    </div>
  </div>
)

const OpenExample = () => (
  <div className='absolute left-[1256px] top-[88px] w-[317px] h-[475px] bg-white shadow-[0_0_6px_rgba(0,0,0,0.45)] flex flex-col overflow-hidden font-["Open_Sans",sans-serif]'>
    <div className="h-[20px] shrink-0 flex items-center pl-[3px] text-[9px] text-[#222]">
      <svg width="11" height="11" viewBox="0 0 11 11" className="mr-[4px]">
        <rect width="11" height="8" fill="#5a3a6a" />
        <rect y="8" width="11" height="3" fill="#d3222f" />
        <path d="M2 6L4 2L6 6L9 2" stroke="#d8b36a" fill="none" />
      </svg>
      <span className="flex-1">Open Example</span>
      <svg width="10" height="10" viewBox="0 0 10 10" stroke="#444"><path d="M1 5H9" /></svg>
      <svg width="10" height="10" viewBox="0 0 10 10" fill="none" stroke="#222" strokeWidth="1.2" className="ml-[20px]"><rect x="1.5" y="1.5" width="7" height="7" /></svg>
      <svg width="10" height="10" viewBox="0 0 10 10" stroke="#444" className="ml-[21px] mr-[7px]"><path d="M1 1L9 9M9 1L1 9" /></svg>
    </div>
    <div className="h-[16px] shrink-0 flex items-center pl-[5px] mt-[5px]">
      <svg width="11" height="10" viewBox="0 0 11 10" fill="#3a8fd8"><path d="M0 5L5 0V3H11V7H5V10Z" /></svg>
      <svg width="11" height="10" viewBox="0 0 11 10" fill="#a8a8a8" className="ml-[12px]"><path d="M11 5L6 0V3H0V7H6V10Z" /></svg>
      <svg width="11" height="10" viewBox="0 0 11 10" fill="#3a8fd8" className="ml-[12px]"><path d="M5.5 0L11 5H9.5V10H6.5V7H4.5V10H1.5V5H0Z" /></svg>
      <div className='ml-[8px] flex-1 h-[13px] border border-[#8a8a8a] flex items-center pl-[4px] pr-[2px] font-["Liberation_Mono",monospace] text-[7px] text-[#333]'>
        <svg width="9" height="9" viewBox="0 0 9 9" fill="none" stroke="#3a6ea8" strokeWidth="1.4"><circle cx="3.5" cy="3.5" r="2.5" /><path d="M5 5L9 9" /></svg>
        <span className="ml-[4px] flex-1">RFPro</span>
        <svg width="6" height="6" viewBox="0 0 6 6" stroke="#111" strokeWidth="1.4"><path d="M0 0L6 6M6 0L0 6" /></svg>
      </div>
    </div>
    <div className="pl-px mt-[12px] font-bold text-[14px] leading-[22px] text-black">Search Results</div>
    <div className="pl-px mt-[12px] text-[8.2px] leading-[12px] text-[#222]">Showing 6 of 6 results found.</div>
    <div className="flex-1 min-h-0 flex mt-[9px]">
      <div className="flex-1 overflow-hidden pt-[3px]">
        <ExampleItem
          title="RFPro Two Stage RF Board Amplifier"
          desc={['Demonstrates the RFPro flow used in two stage RF board amplifier analysis which', 'includes Momentum RF EM simulation for the board using RFPro.']}
          ws="RFPro_2Stage_RF_Board_Amp_wrk.7zads"
          visited
        />
        <ExampleItem title="RFPro for PCB Class - Low-Pass Filter Design" desc={['Demonstrates RFPro basic handling']} ws="RFPro_BoardDesign_Lab1_wrk.7zads" />
        <ExampleItem title="RFPro for PCB Class - Smart Mount Example" desc={['Demonstrates the Smart Mount Technology']} ws="RFPro_BoardDesign_Lab2_wrk.7zads" />
        <ExampleItem title="RFPro for PCB Class - EM Model Extraction" desc={['Demonstrates the EM model extraction']} ws="RFPro_BoardDesign_Lab3_wrk.7zads" />
        <ExampleItem title="EM Circuit Excitation" desc={['Use of EM Circuit Excitation AEL Addon.']} ws="Printed_dipole_antenna_wrk.7zads" />
        <div className="pl-[4px] leading-[14px] text-[11.2px] text-[#222]">SPDT Module Design</div>
      </div>
      <div className="w-[7px] shrink-0 bg-[#f0f0f0] flex flex-col">
        <div className="h-[10px] flex items-center justify-center">
          <svg width="6" height="4" viewBox="0 0 6 4" fill="none" stroke="#555"><path d="M.5 3.5L3 1L5.5 3.5" /></svg>
        </div>
        <div className="h-[295px] bg-[#cdcdcd]" />
        <div className="flex-1" />
        <div className="h-[10px] flex items-center justify-center">
          <svg width="6" height="4" viewBox="0 0 6 4" fill="none" stroke="#555"><path d="M.5 .5L3 3L5.5 .5" /></svg>
        </div>
      </div>
    </div>
  </div>
)

const Annotations = () => (
  <>
    <div className='absolute left-[658px] top-[221px] font-["Lato",sans-serif] text-[29px] leading-[35px] text-[#e0322f]'>
      Simulation
      <br />
      Failed
    </div>
    <svg width="1920" height="1080" viewBox="0 0 1920 1080" className="absolute left-0 top-0 pointer-events-none">
      <path d="M845 230L1218 253" stroke="#ed1c24" strokeWidth="5" />
      <path d="M1247 254L1209 238L1206 270Z" fill="#ed1c24" />
      <path d="M845 258L1125 675" stroke="#ed1c24" strokeWidth="6" />
      <path d="M1140 697L1112 682L1134 664Z" fill="#ed1c24" />
    </svg>
  </>
)

const App = () => {
  return (
    <div className='relative w-[1920px] h-[1080px] overflow-hidden bg-[#efefef] flex flex-col font-["DejaVu_Sans",sans-serif]'>
      <div className="h-[23px] shrink-0 bg-white flex items-center pl-[3px]">
        <div className="w-[16px] h-[16px] bg-white border border-[#2a82c8] flex items-center justify-center">
          <span className='font-["Liberation_Sans",sans-serif] font-bold text-[10px] tracking-[-0.5px] text-[#c8242c]'>RF</span>
        </div>
        <span className='ml-[4px] pt-px font-["Noto_Sans",sans-serif] text-[12.5px] text-[#111] whitespace-nowrap'>
          RF_Board_lib:Two_Stage_Amp:rfpro - RFPro Setup 2023 Update 2.0 (feraligatr)
        </span>
        <div className="flex-1" />
        <svg width="11" height="10" viewBox="0 0 11 10" stroke="#222" className="mr-[35px]"><path d="M0 5H10" /></svg>
        <svg width="10" height="10" viewBox="0 0 10 10" fill="none" stroke="#222" className="mr-[35px]">
          <rect x=".5" y="2.5" width="7" height="7" />
          <path d="M2.5 2.5V.5H9.5V7.5H7.5" />
        </svg>
        <svg width="11" height="11" viewBox="0 0 11 11" stroke="#222" className="mr-[20px]"><path d="M.5 .5L10.5 10.5M10.5 .5L.5 10.5" /></svg>
      </div>
      <div className="h-[35px] shrink-0">
        <div className={`w-[388px] h-[34px] border-b border-[#c8c8c8] flex items-center pl-[13px] text-[12px] text-[#222] ${uiFont}`}>
          <span className="w-[34px]"><u>F</u>ile</span>
          <span className="w-[37px]"><u>E</u>dit</span>
          <span className="w-[42px]"><u>V</u>iew</span>
          <span className="w-[47px]"><u>T</u>ools</span>
          <span className="w-[44px]"><u>H</u>elp</span>
          <div className={`w-[5px] h-[24px] ${grip}`} />
          <div className="ml-px w-px h-[26px] bg-[#d0d0d0]" />
          <svg width="20" height="20" viewBox="0 0 20 20" fill="none" stroke="#8f8f8f" strokeWidth="3" className="ml-[8px]">
            <path d="M6 5A7 7 0 1 1 4 12" />
            <path d="M2 1V9H9Z" fill="#8f8f8f" stroke="none" />
          </svg>
          <svg width="20" height="20" viewBox="0 0 20 20" fill="none" stroke="#a6a6a6" strokeWidth="3" className="ml-[11px]">
            <path d="M14 5A7 7 0 1 0 16 12" />
            <path d="M18 1V9H11Z" fill="#a6a6a6" stroke="none" />
          </svg>
          <div className={`ml-[15px] w-[5px] h-[24px] ${grip}`} />
          <div className="relative ml-[1px] w-[60px] shrink-0 h-[4px] border border-[#9a9a9a] rounded-full bg-[#eaeaea] flex items-center">
            <svg width="11" height="14" viewBox="0 0 11 14" className="absolute left-0">
              <path d="M.5 .5H10.5V8L5.5 13.5L.5 8Z" fill="#f2f2f2" stroke="#999" />
            </svg>
          </div>
          <span className='ml-[6px] shrink-0 whitespace-nowrap font-["Liberation_Mono",monospace] text-[10px]'>x 1</span>
        </div>
      </div>
      <div className="flex-1 min-h-0 flex">
        <LeftColumn />
        <div className="w-[4px] shrink-0" />
        <LayoutWindow />
        <SimulationsWindow />
        <SideStrip />
      </div>
      <div className="h-[26px] shrink-0 border-t border-[#8a8a8a] flex justify-end">
        <div className={`w-[37px] border-l border-[#aaa] flex items-center pl-[7px] text-[12px] text-[#222] ${uiFont}`}>Idle</div>
      </div>
      <div className="h-[2px] shrink-0 bg-[#333]" />
      <RemoteBar />
      <OpenExample />
      <Annotations />
    </div>
  )
}

export default App
